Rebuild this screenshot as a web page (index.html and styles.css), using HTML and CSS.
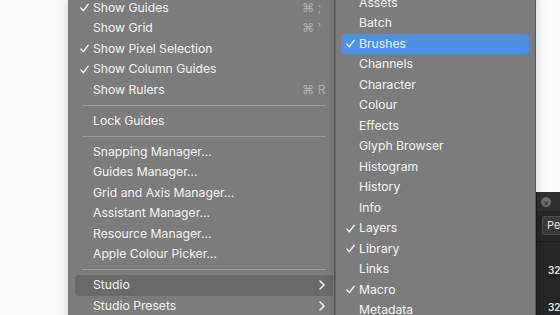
FILE: index.html
```html
<!DOCTYPE html>
<html lang="en">

<head>
    <meta charset="UTF-8">
    <meta name="viewport" content="width=device-width, initial-scale=1.0">
    <title>View Menu</title>
    <link rel="stylesheet" href="styles.css">
</head>

<body>
    <div class="screen">
        <div class="gutter"></div>

        <div class="menu menu--main">
            <div class="item"><span class="check"><svg viewBox="0 0 10 9"><polyline points="1,5 3.8,8 9,1"/></svg></span><span class="label">Show Guides</span><span class="key">⌘ ;</span></div>
            <div class="item"><span class="check"></span><span class="label">Show Grid</span><span class="key">⌘ '</span></div>
            <div class="item"><span class="check"><svg viewBox="0 0 10 9"><polyline points="1,5 3.8,8 9,1"/></svg></span><span class="label">Show Pixel Selection</span></div>
            <div class="item"><span class="check"><svg viewBox="0 0 10 9"><polyline points="1,5 3.8,8 9,1"/></svg></span><span class="label">Show Column Guides</span></div>
            <div class="item"><span class="check"></span><span class="label">Show Rulers</span><span class="key">⌘ R</span></div>
            <div class="sep"></div>
            <div class="item"><span class="check"></span><span class="label">Lock Guides</span></div>
            <div class="sep"></div>
            <div class="item"><span class="check"></span><span class="label">Snapping Manager...</span></div>
            <div class="item"><span class="check"></span><span class="label">Guides Manager...</span></div>
            <div class="item"><span class="check"></span><span class="label">Grid and Axis Manager...</span></div>
            <div class="item"><span class="check"></span><span class="label">Assistant Manager...</span></div>
            <div class="item"><span class="check"></span><span class="label">Resource Manager...</span></div>
            <div class="item"><span class="check"></span><span class="label">Apple Colour Picker...</span></div>
            <div class="sep"></div>
            <div class="item item--open"><span class="check"></span><span class="label">Studio</span><svg class="chev" viewBox="0 0 6 10"><polyline points="1,1 5,5 1,9"/></svg></div>
            <div class="item"><span class="check"></span><span class="label">Studio Presets</span><svg class="chev" viewBox="0 0 6 10"><polyline points="1,1 5,5 1,9"/></svg></div>
        </div>

        <div class="menu menu--sub">
            <div class="item"><span class="check"></span><span class="label">Assets</span></div>
            <div class="item"><span class="check"></span><span class="label">Batch</span></div>
            <div class="item item--active"><span class="check"><svg viewBox="0 0 10 9"><polyline points="1,5 3.8,8 9,1"/></svg></span><span class="label">Brushes</span></div>
            <div class="item"><span class="check"></span><span class="label">Channels</span></div>
            <div class="item"><span class="check"></span><span class="label">Character</span></div>
            <div class="item"><span class="check"></span><span class="label">Colour</span></div>
            <div class="item"><span class="check"></span><span class="label">Effects</span></div>
            <div class="item"><span class="check"></span><span class="label">Glyph Browser</span></div>
            <div class="item"><span class="check"></span><span class="label">Histogram</span></div>
            <div class="item"><span class="check"></span><span class="label">History</span></div>
            <div class="item"><span class="check"></span><span class="label">Info</span></div>
            <div class="item"><span class="check"><svg viewBox="0 0 10 9"><polyline points="1,5 3.8,8 9,1"/></svg></span><span class="label">Layers</span></div>
            <div class="item"><span class="check"><svg viewBox="0 0 10 9"><polyline points="1,5 3.8,8 9,1"/></svg></span><span class="label">Library</span></div>
            <div class="item"><span class="check"></span><span class="label">Links</span></div>
            <div class="item"><span class="check"><svg viewBox="0 0 10 9"><polyline points="1,5 3.8,8 9,1"/></svg></span><span class="label">Macro</span></div>
            <div class="item"><span class="check"></span><span class="label">Metadata</span></div>
        </div>

        <div class="side">
            <div class="side__blank"></div>
            <div class="panel">
                <div class="panel__bar"><span class="panel__close">×</span></div>
                <div class="panel__tools"><span class="panel__btn">Per</span></div>
                <div class="panel__list">
                    <div class="panel__num">32</div>
                    <div class="panel__num">32</div>
                </div>
            </div>
        </div>
    </div>
</body>

</html>
```

FILE: styles.css
```css
body {
    margin: 0;
    padding: 0;
    background-color: #fbfbfb;
    color: #f4f4f4;
    font-family: 'Inter', 'Liberation Sans', sans-serif;
    font-size: 12.2px;
    overflow: hidden;
}

.screen {
    height: 315px;
    display: flex;
    align-items: flex-start;
    overflow: hidden;
}

.gutter {
    width: 68px;
    flex-shrink: 0;
}

.menu {
    flex-shrink: 0;
    background-color: #7c7c7c;
    box-shadow: 0 0 10px rgba(0, 0, 0, 0.18);
    border-right: 1px solid #5f5f5f;
}

.menu--main {
    width: 258px;
    margin-top: -2.5px;
    padding: 0 1px 20px 7px;
    position: relative;
    z-index: 1;
}

.menu--sub {
    width: 188px;
    margin-top: -7.5px;
    padding: 0 6px 20px 5px;
    position: relative;
    z-index: 2;
    border-left: 1px solid #656565;
}

.item {
    height: 20.5px;
    line-height: 20.5px;
    display: flex;
    align-items: center;
    border-radius: 4px;
    white-space: nowrap;
}

.item--open {
    background-color: #6a6a6a;
    border-radius: 4px 0 0 4px;
}

.item--active {
    background-color: #4b91e6;
}

.check {
    width: 13px;
    padding-left: 5px;
    flex-shrink: 0;
    display: flex;
    align-items: center;
}

.check svg {
    width: 9px;
    height: 9px;
    fill: none;
    stroke: #f4f4f4;
    stroke-width: 1.6;
    stroke-linecap: round;
    stroke-linejoin: round;
}

.label {
    flex: 1;
}

.key {
    color: #b0b0b0;
    width: 28px;
    padding-right: 3px;
}

.chev {
    width: 6px;
    height: 10px;
    margin-right: 8px;
    fill: none;
    stroke: #f0f0f0;
    stroke-width: 1.6;
    stroke-linecap: round;
    stroke-linejoin: round;
}

.sep {
    height: 10.5px;
    display: flex;
    align-items: center;
    padding: 0 7px;
}

.sep::after {
    content: '';
    flex: 1;
    height: 1px;
    background-color: #9b9b9b;
}

.side {
    flex: 1;
    height: 315px;
    display: flex;
    flex-direction: column;
}

.side__blank {
    height: 192px;
    flex-shrink: 0;
}

.panel {
    flex: 1;
    overflow: hidden;
    background-color: #262626;
    border-left: 1px solid #1a1a1a;
    font-size: 11px;
}

.panel__bar {
    height: 19px;
    background-color: #303030;
    display: flex;
    align-items: center;
    padding-left: 4px;
}

.panel__close {
    width: 10px;
    height: 10px;
    border-radius: 50%;
    background-color: #6e6e6e;
    color: #2f2f2f;
    font-size: 10px;
    line-height: 10px;
    text-align: center;
}

.panel__tools {
    padding: 5px 0 6px 5px;
    border-bottom: 1px solid #1d1d1d;
}

.panel__btn {
    display: block;
    height: 17px;
    line-height: 17px;
    padding-left: 4px;
    background-color: #3a3a3a;
    border: 1px solid #4d4d4d;
    border-right: 0;
    border-radius: 3px 0 0 3px;
    color: #e6e6e6;
    font-size: 11px;
}

.panel__list {
    padding: 22px 0 0 11px;
}

.panel__num {
    height: 37px;
    font-weight: 600;
    font-size: 10px;
    color: #e8e8e8;
}
```
